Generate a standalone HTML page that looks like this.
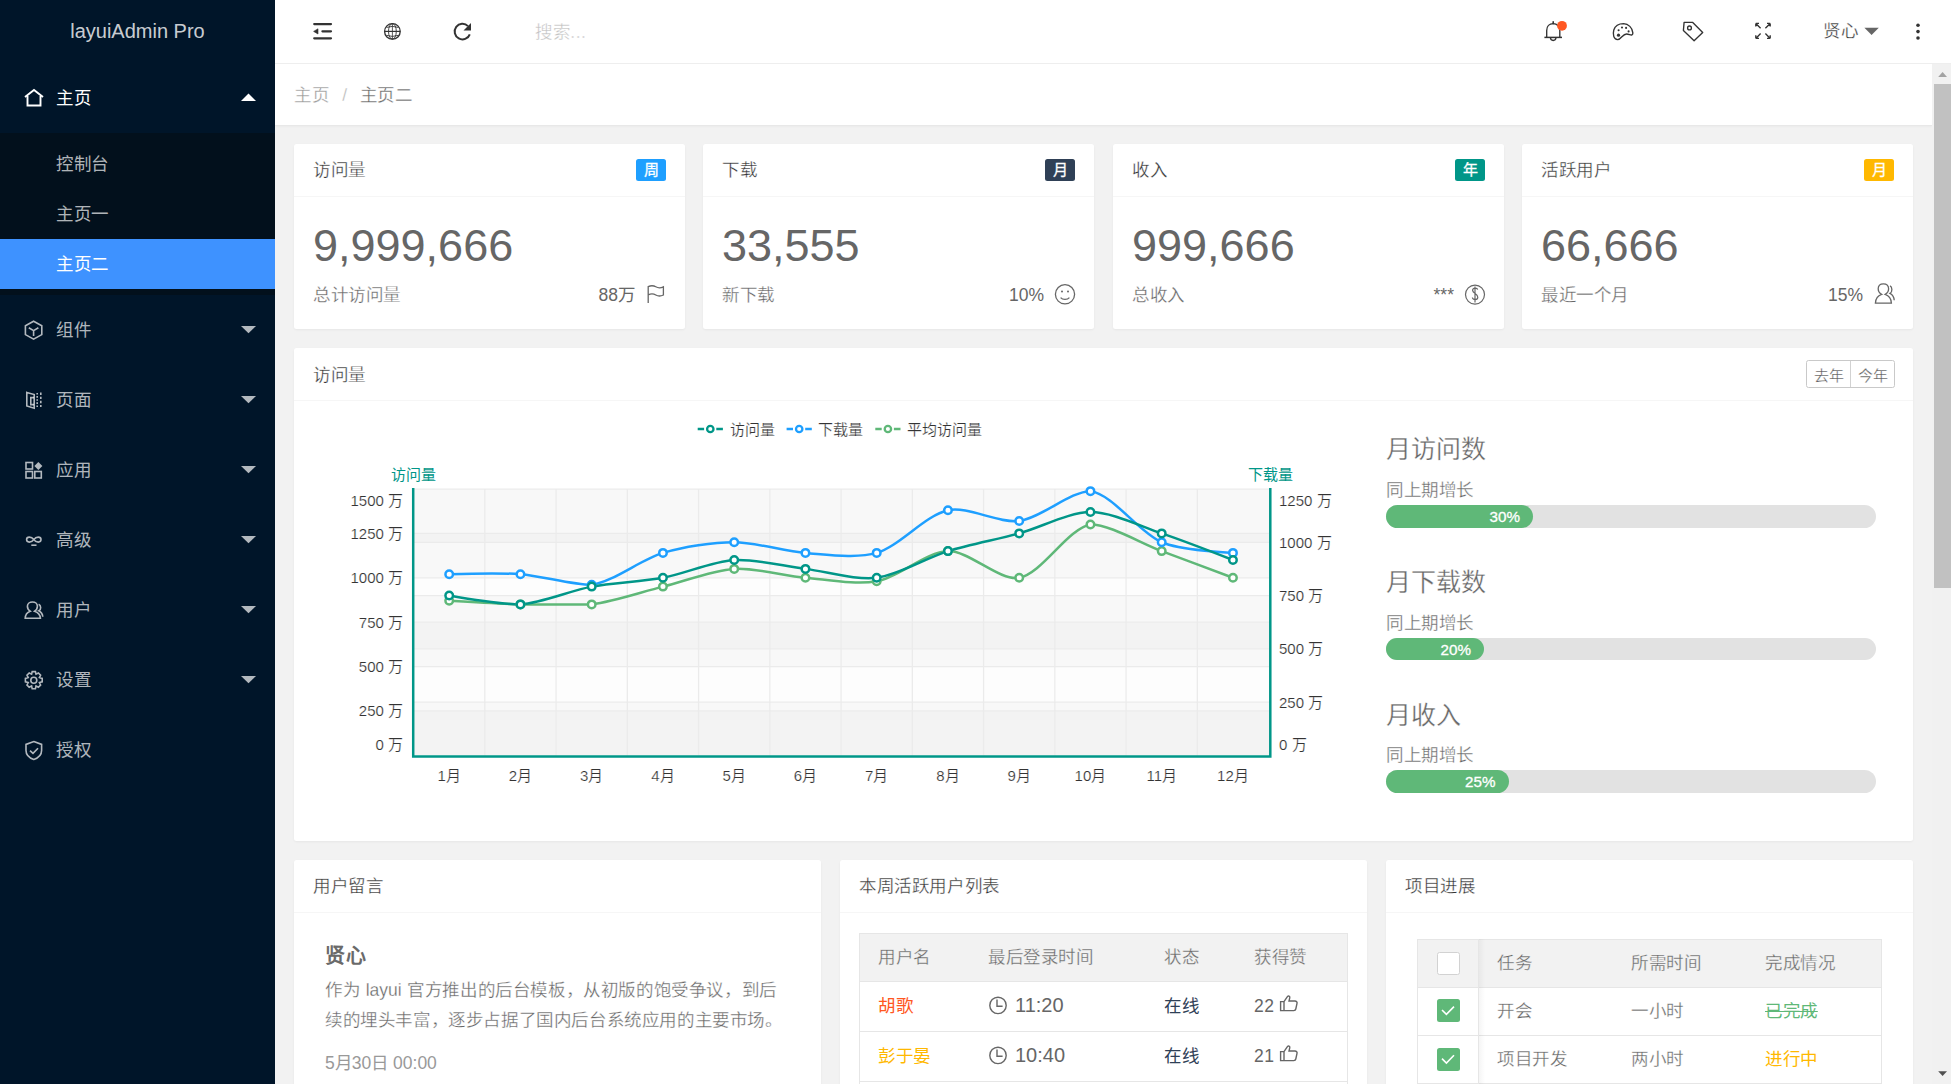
<!DOCTYPE html>
<html lang="zh-CN">
<head>
<meta charset="utf-8">
<title>layuiAdmin Pro</title>
<style>
*{margin:0;padding:0;box-sizing:border-box}
html,body{width:1951px;height:1084px;overflow:hidden}
body{position:relative;background:#f2f2f2;font-family:"Liberation Sans",sans-serif;font-size:17.5px;color:#333;letter-spacing:.6px}
.big,.logo,svg,.sr,.btns,.badge,.prog i,.h3,.l0{letter-spacing:0}
.a{position:absolute;white-space:nowrap}
svg{position:absolute;overflow:visible}
/* sidebar */
.side{position:absolute;left:0;top:0;width:275px;height:1084px;background:#001529}
.logo{left:0;width:275px;text-align:center;top:17px;line-height:28px;font-size:20px;color:rgba(255,255,255,.8)}
.nav{color:rgba(255,255,255,.7);font-size:17.5px;line-height:24px}
.nav.on{color:#fff}
.sub{position:absolute;left:0;top:133px;width:275px;height:162px;background:#02101c}
.sel{position:absolute;left:0;top:239px;width:275px;height:50px;background:#3e92ff}
/* header */
.hdr{position:absolute;left:275px;top:0;width:1676px;height:64px;background:#fff;border-bottom:1px solid #eee}
.crumb{position:absolute;left:275px;top:64px;width:1657px;height:62px;background:#fff;border-bottom:1px solid #e8e8e8;box-shadow:0 1px 2px rgba(0,0,0,.03)}
.sbar{position:absolute;left:1932px;top:64px;width:19px;height:1020px;background:#f1f1f1}
.thumb{position:absolute;left:2px;top:20px;width:17px;height:504px;background:#c1c1c1}
/* cards */
.card{position:absolute;background:#fff;border-radius:2.5px;box-shadow:0 1px 2.5px rgba(0,0,0,.05)}
.ch{position:absolute;left:0;top:0;right:0;height:53px;border-bottom:1px solid #f6f6f6}
.ct{left:19px;top:12px;line-height:28px;font-size:17.5px;color:#333}
.badge{position:absolute;top:15px;right:19px;width:30px;height:22px;border-radius:2.5px;color:#fff;font-size:15px;line-height:22px;text-align:center;-webkit-text-stroke:.3px #fff}
.big{left:19px;top:77px;font-size:45px;line-height:50px;color:#666}
.st{left:19px;top:139px;line-height:24px;color:#666}
.sr{right:19px;top:139px;line-height:24px;color:#666}
.btns{position:absolute;right:18px;top:12px;height:28px;width:89px;border:1px solid #c9c9c9;border-radius:2.5px;font-size:15px;color:#555}
.btns span{position:absolute;top:0;height:26px;line-height:30px;-webkit-text-stroke:.3px #fff;width:44px;text-align:center}
.h3{font-size:25px;line-height:30px;color:#666}
.pl{font-size:17.5px;line-height:24px;color:#666}
.prog{position:absolute;left:1386px;width:490px;height:22.5px;border-radius:12px;background:#e2e2e2}
.prog i{position:absolute;left:0;top:0;height:22.5px;border-radius:12px;background:#5fb878;color:#fff;font-style:normal;font-size:15.2px;line-height:23.6px;text-align:right;padding-right:13px;-webkit-text-stroke:.3px #fff}
table{border-collapse:collapse}
.tb{position:absolute;border:1px solid #e6e6e6}
.th{position:absolute;background:#f2f2f2}
.tl{position:absolute;height:1px;background:#e6e6e6}
.tx{color:#666;line-height:24px}
.cb{position:absolute;width:22.5px;height:22.5px;border-radius:2.5px}

.sk{-webkit-text-stroke:.3px #fff}
.skg{-webkit-text-stroke:.3px #f2f2f2}
</style>
</head>
<body>
<!-- SIDEBAR -->
<div class="side">
  <div class="a logo">layuiAdmin Pro</div>
  <div class="sub"></div>
  <div class="sel"></div>
  <div class="a nav on skn" style="left:56px;top:86px">主页</div>
  <div class="a nav sks" style="left:56px;top:152px">控制台</div>
  <div class="a nav sks" style="left:56px;top:202px">主页一</div>
  <div class="a nav on skb" style="left:56px;top:252px">主页二</div>
  <div class="a nav skn" style="left:56px;top:318px">组件</div>
  <div class="a nav skn" style="left:56px;top:388px">页面</div>
  <div class="a nav skn" style="left:56px;top:458px">应用</div>
  <div class="a nav skn" style="left:56px;top:528px">高级</div>
  <div class="a nav skn" style="left:56px;top:598px">用户</div>
  <div class="a nav skn" style="left:56px;top:668px">设置</div>
  <div class="a nav skn" style="left:56px;top:738px">授权</div>
  <svg width="275" height="800" style="left:0;top:0">
    <!-- arrows -->
    <path d="M241 101 L248.5 93.6 L256 101 Z" fill="#fff"/>
    <g fill="rgba(255,255,255,.7)">
      <path d="M241 326 L256 326 L248.5 333.3 Z"/>
      <path d="M241 396 L256 396 L248.5 403.3 Z"/>
      <path d="M241 466 L256 466 L248.5 473.3 Z"/>
      <path d="M241 536 L256 536 L248.5 543.3 Z"/>
      <path d="M241 606 L256 606 L248.5 613.3 Z"/>
      <path d="M241 676 L256 676 L248.5 683.3 Z"/>
    </g>
    <!-- home -->
    <g fill="none" stroke="#fff" stroke-width="1.9">
      <path d="M25 97 L34 90 L43 97"/>
      <path d="M27.5 96 V105.5 H40.5 V96"/>
    </g>
    <g fill="none" stroke="rgba(255,255,255,.7)" stroke-width="1.6">
      <!-- component cube -->
      <path d="M33.6 321.2 L41.8 325.8 V334.6 L33.6 339.2 L25.4 334.6 V325.8 Z"/>
      <path d="M28.8 327.8 L33.6 330.6 L38.4 327.8 M33.6 330.6 V336"/>
      <!-- page -->
      <path d="M26.8 392.4 L34.2 394.6 V408.2 L26.8 406 Z"/>
      <path d="M34 397.6 H30.8 V404.6 H34"/>
      <path d="M37.2 393 V408" stroke-dasharray="1.6 1.5"/>
      <path d="M40.8 392.6 V407" stroke-dasharray="2.4 1.7"/>
      <!-- app -->
      <rect x="26" y="462.5" width="6.5" height="6.5"/>
      <rect x="26" y="471.5" width="6.5" height="6.5"/>
      <rect x="34.8" y="471.5" width="6.5" height="6.5"/>
      <!-- senior infinity -->
      <path d="M33.8 539.6 C31.5 536.3 26.6 536.3 26.6 539.6 C26.6 542.9 31.5 542.9 33.8 539.6 C36.1 536.3 41 536.3 41 539.6 C41 542.9 36.1 542.9 33.8 539.6 Z"/>
      <path d="M31.3 545.2 H36.5"/>
      <!-- user -->
      <path d="M25.2 618.2 C25.4 614.6 27.4 612.2 30.2 611.2 C28.4 610 27.4 608 27.4 606.2 C27.4 603.6 29.8 602 32.5 602 C35.2 602 37.4 603.6 37.4 606.2 C37.4 608 36.4 610 34.6 611.2 C37.4 612.2 40.2 614.6 40.4 618.2 Z"/>
      <path d="M38.6 604.2 C41.2 605.2 41.4 609.6 38.8 610.8 C41 612 42.6 614.4 42.8 616.8"/>
      <!-- gear -->
      <circle cx="33.8" cy="680.2" r="3"/>
      <path d="M32.2 671.6 H35.4 L36 674.2 L38.4 673 L40.6 675.2 L39.4 677.6 L42.2 678.4 V681.8 L39.4 682.6 L40.6 685 L38.4 687.2 L36 686 L35.4 688.8 H32.2 L31.6 686 L29.2 687.2 L27 685 L28.2 682.6 L25.4 681.8 V678.4 L28.2 677.6 L27 675.2 L29.2 673 L31.6 674.2 Z"/>
      <!-- shield -->
      <path d="M33.8 741.6 L41.6 744.4 V750.4 C41.6 755 37.8 758 33.8 759.4 C29.8 758 26 755 26 750.4 V744.4 Z"/>
      <path d="M30 750.6 L33 753.4 L38 748.2"/>
    </g>
    <path d="M38.4 462 L42.4 466 L38.4 470 L34.4 466 Z" fill="rgba(255,255,255,.7)"/>
  </svg>
</div>

<!-- HEADER -->
<div class="hdr"></div>
<svg width="1676" height="63" style="left:0;top:0">
  <g fill="#333">
    <!-- shrink -->
    <path d="M314.2 24.1 H331 M322.4 31.3 H331 M314.2 38.3 H331" stroke="#333" stroke-width="2.2" stroke-linecap="round" fill="none"/>
    <path d="M313.6 31.4 L318 28.8 V34 Z" stroke="#333" stroke-width=".6" stroke-linejoin="round"/>
  </g>
  <g fill="none" stroke="#333" stroke-width="1.5">
    <!-- globe -->
    <circle cx="392.4" cy="31.4" r="7.8" stroke-width="1.35"/>
    <path d="M384.6 31.4 H400.2" stroke-width="1.2"/>
    <path d="M392.4 23.6 V39.2" stroke-width=".8"/>
    <ellipse cx="392.4" cy="31.4" rx="3.9" ry="7.8" stroke-width=".9"/>
    <path d="M386.6 27.4 Q392.4 25.4 398.2 27.4 M386.6 35.4 Q392.4 37.4 398.2 35.4" stroke-width=".9"/>
    <!-- refresh -->
    <path d="M469.8 34.3 A7.8 7.8 0 1 1 468 26.1" stroke-width="2"/>
  </g>
  <path d="M471 23 V30.6 H463.5 Z" fill="#333"/>
</svg>
<div class="a sk" style="left:535px;top:19px;line-height:26px;font-size:17.5px;color:#c2c2c2">搜索...</div>
<svg width="1951" height="63" style="left:0;top:0">
  <g fill="none" stroke="#333" stroke-width="1.35">
    <!-- bell -->
        <path d="M1546.7 37.4 V30.4 C1546.7 26.4 1549.4 23.6 1553.2 23.6 C1557 23.6 1559.8 26.4 1559.8 30.4 V37.4"/>
    <path d="M1544.4 37.4 H1562" stroke-width="1.5"/>
    <path d="M1550.4 37.8 C1550.8 41.4 1555.6 41.4 1556 37.8"/>
    <path d="M1553.2 21.8 V23.8" stroke-width="1.6" stroke-linecap="round"/>
    <!-- palette -->
    <path d="M1617.6 39.6 C1613.6 39.4 1612.6 34.4 1613.8 30 C1615.2 25.6 1619.6 23.6 1623.6 23.6 C1628.4 23.8 1632.4 27.8 1632.8 32.6 C1632.9 33.8 1632.6 35.2 1631.4 35 C1629.8 34.8 1628.6 34 1626.6 34 C1624.6 34 1623 35.6 1621.6 37 C1620.4 38.4 1619.2 39.6 1617.6 39.6 Z"/>
    <!-- tag -->
    <path d="M1684.1 22.3 H1692.5 L1702.7 32.5 L1694.1 40.8 L1683.4 30.4 Z" stroke-linejoin="round"/>
    <circle cx="1689.5" cy="27.9" r="1.9"/>
    <!-- fullscreen -->
    <path d="M1755.8 23.4 L1760.6 28.2 M1755.8 23.4 H1759 M1755.8 23.4 V26.6" />
    <path d="M1770.2 23.4 L1765.4 28.2 M1770.2 23.4 H1767 M1770.2 23.4 V26.6" />
    <path d="M1755.8 38.4 L1760.6 33.6 M1755.8 38.4 H1759 M1755.8 38.4 V35.2" />
    <path d="M1770.2 38.4 L1765.4 33.6 M1770.2 38.4 H1767 M1770.2 38.4 V35.2" />
  </g>
  <circle cx="1562" cy="25.8" r="4.9" fill="#ff5722"/>
  <g fill="#333">
    <circle cx="1618.5" cy="35.2" r="1.6"/>
    <circle cx="1618.6" cy="30.3" r="1.05"/>
    <circle cx="1622" cy="27.5" r="1.05"/>
    <circle cx="1626.1" cy="27.9" r="1.05"/>
    <circle cx="1628.6" cy="31.4" r="1.05"/>
    <circle cx="1918" cy="25.2" r="1.8"/>
    <circle cx="1918" cy="31.6" r="1.8"/>
    <circle cx="1918" cy="38" r="1.8"/>
  </g>
  <path d="M1864.4 27.8 H1878.8 L1871.6 35 Z" fill="#666"/>
</svg>
<div class="a sk" style="left:1823px;top:18px;line-height:26px;font-size:17.5px;color:#333">贤心</div>

<!-- BREADCRUMB -->
<div class="crumb"></div>
<div class="a sk" style="left:294px;top:82px;line-height:26px;color:#999">主页<span style="margin:0 12px 0 13px;color:#b5b5b5">/</span><span style="color:#666">主页二</span></div>

<!-- SCROLLBAR -->
<div class="sbar"><div class="thumb"></div></div>
<svg width="1951" height="1084" style="left:0;top:0">
  <path d="M1938.2 77 L1942.6 72 L1947 77 Z" fill="#a3a3a3"/>
  <path d="M1938.2 1071.2 L1947 1071.2 L1942.6 1076 Z" fill="#505050"/>
</svg>

<!-- STAT CARDS -->
<div class="card" style="left:294px;top:144px;width:391px;height:185px">
  <div class="ch"></div>
  <div class="a ct sk">访问量</div>
  <div class="badge" style="background:#1e9fff">周</div>
  <div class="a big">9,999,666</div>
  <div class="a st sk">总计访问量</div>
  <div class="a sr" style="right:50px">88万</div>
  <svg width="391" height="185" style="left:0;top:0"><g fill="none" stroke="#666" stroke-width="1.3">
    <path d="M354.2 159 V142.6 C357 141.4 359.4 141.4 361.8 142.8 C364.2 144.2 366.6 144.2 369.4 142.8 V151 C366.6 152.4 364.2 152.4 361.8 151 C359.4 149.6 357 149.6 354.2 150.8"/>
  </g></svg>
</div>
<div class="card" style="left:703px;top:144px;width:391px;height:185px">
  <div class="ch"></div>
  <div class="a ct sk">下载</div>
  <div class="badge" style="background:#2f4056">月</div>
  <div class="a big">33,555</div>
  <div class="a st sk">新下载</div>
  <div class="a sr" style="right:50px">10%</div>
  <svg width="391" height="185" style="left:0;top:0"><g fill="none" stroke="#666" stroke-width="1.3">
    <circle cx="362" cy="150.3" r="9.6"/>
    <path d="M357.6 153.6 C359.6 156 364.4 156 366.4 153.6"/>
  </g><g fill="#666"><circle cx="359" cy="147.6" r="1"/><circle cx="365" cy="147.6" r="1"/></g></svg>
</div>
<div class="card" style="left:1113px;top:144px;width:391px;height:185px">
  <div class="ch"></div>
  <div class="a ct sk">收入</div>
  <div class="badge" style="background:#009688">年</div>
  <div class="a big">999,666</div>
  <div class="a st sk">总收入</div>
  <div class="a sr" style="right:50px">***</div>
  <svg width="391" height="185" style="left:0;top:0"><g fill="none" stroke="#666" stroke-width="1.2">
    <circle cx="362" cy="150.6" r="9.5"/>
    <path d="M364.6 145.6 C364.4 143.6 359.4 143.4 359.6 146.4 C359.8 149.4 364.8 149.8 364.8 153.2 C364.8 156.4 359.4 156.2 359.4 153.6 M362 142.6 V158.6" />
  </g></svg>
</div>
<div class="card" style="left:1522px;top:144px;width:391px;height:185px">
  <div class="ch"></div>
  <div class="a ct sk">活跃用户</div>
  <div class="badge" style="background:#ffb800">月</div>
  <div class="a big">66,666</div>
  <div class="a st sk">最近一个月</div>
  <div class="a sr" style="right:50px">15%</div>
  <svg width="391" height="185" style="left:0;top:0"><g fill="none" stroke="#666" stroke-width="1.3">
    <path d="M353.4 159.2 C353.6 154.8 356 151.6 359.6 150.4 C357.4 149.2 356.2 147.2 356.2 144.8 C356.2 141.4 358.6 139.8 361.4 139.8 C364.2 139.8 366.6 141.4 366.6 144.8 C366.6 147.2 365.4 149.2 363.2 150.4 C366.8 151.6 369.2 154.8 369.4 159.2 Z"/>
    <path d="M368 141.8 C370.4 142.8 370.6 148 368 149.4 C370.4 150.6 372 153.4 372.2 156.2"/>
  </g></svg>
</div>

<!-- CHART CARD -->
<div class="card" style="left:294px;top:348px;width:1619px;height:493px">
  <div class="ch"></div>
  <div class="a ct sk" style="top:13px">访问量</div>
  <div class="btns"><span style="left:0;border-right:1px solid #d2d2d2;width:44px">去年</span><span style="left:44px">今年</span></div>
</div>
<svg width="1951" height="1084" style="left:0;top:0">
<rect x="413.00" y="710.88" width="857.00" height="44.38" fill="#f3f3f3"/>
<rect x="413.00" y="702.00" width="857.00" height="8.88" fill="#f8f8f8"/>
<rect x="413.00" y="666.50" width="857.00" height="35.50" fill="#fdfdfd"/>
<rect x="413.00" y="648.75" width="857.00" height="17.75" fill="#f8f8f8"/>
<rect x="413.00" y="622.12" width="857.00" height="26.62" fill="#f3f3f3"/>
<rect x="413.00" y="595.50" width="857.00" height="26.62" fill="#f8f8f8"/>
<rect x="413.00" y="577.75" width="857.00" height="17.75" fill="#fdfdfd"/>
<rect x="413.00" y="542.25" width="857.00" height="35.50" fill="#f8f8f8"/>
<rect x="413.00" y="533.38" width="857.00" height="8.88" fill="#f3f3f3"/>
<rect x="413.00" y="489.00" width="857.00" height="44.38" fill="#f8f8f8"/>
<path d="M413.00 710.88 H1270.00 M413.00 666.50 H1270.00 M413.00 622.12 H1270.00 M413.00 577.75 H1270.00 M413.00 533.38 H1270.00 M413.00 489.00 H1270.00 M413.00 702.00 H1270.00 M413.00 648.75 H1270.00 M413.00 595.50 H1270.00 M413.00 542.25 H1270.00 M413.00 489.00 H1270.00 M484.82 489.00 V755.25 M556.08 489.00 V755.25 M627.33 489.00 V755.25 M698.58 489.00 V755.25 M769.83 489.00 V755.25 M841.08 489.00 V755.25 M912.33 489.00 V755.25 M983.58 489.00 V755.25 M1054.83 489.00 V755.25 M1126.08 489.00 V755.25 M1197.33 489.00 V755.25" stroke="#ebebeb" stroke-width="1.25" fill="none"/>
<path d="M413.2 488.00 V756.4 H1270.3 V488.00" stroke="#009688" stroke-width="2.5" fill="none"/>
<path d="M449.20 600.83 C449.20 600.83 499.06 603.84 520.45 604.38 C541.81 604.38 570.65 604.38 591.70 604.38 C613.40 601.67 641.58 591.95 662.95 586.62 C684.33 581.30 712.59 570.22 734.20 568.88 C755.34 567.56 784.01 575.88 805.45 577.75 C826.76 579.61 856.19 585.13 876.70 581.30 C898.94 577.14 926.39 551.66 947.95 551.12 C969.14 550.60 999.49 581.43 1019.20 577.75 C1042.24 573.44 1067.41 528.81 1090.45 524.50 C1110.16 524.50 1140.33 543.14 1161.70 551.12 C1183.08 559.11 1232.95 577.75 1232.95 577.75" stroke="#5fb878" stroke-width="2.5" fill="none" stroke-linejoin="round"/>
<path d="M449.20 574.20 C449.20 574.20 499.19 572.61 520.45 574.20 C541.94 575.81 571.19 584.85 591.70 584.85 C613.94 581.53 640.71 559.55 662.95 552.90 C683.46 546.77 712.83 542.25 734.20 542.25 C755.58 542.25 783.96 551.29 805.45 552.90 C826.71 554.49 856.96 558.80 876.70 552.90 C899.71 546.02 925.06 515.43 947.95 510.30 C967.81 505.85 998.57 523.73 1019.20 520.95 C1041.32 517.97 1070.43 491.13 1090.45 491.13 C1113.18 494.53 1138.23 532.08 1161.70 542.25 C1180.98 550.61 1232.95 552.90 1232.95 552.90" stroke="#1e9fff" stroke-width="2.5" fill="none" stroke-linejoin="round"/>
<path d="M449.20 595.50 C449.20 595.50 499.31 604.38 520.45 604.38 C542.06 603.03 570.09 590.66 591.70 586.62 C612.84 582.68 641.81 581.70 662.95 577.75 C684.56 573.71 712.59 561.35 734.20 560.00 C755.34 558.68 784.08 566.21 805.45 568.88 C826.83 571.54 855.94 580.34 876.70 577.75 C898.69 575.01 926.20 557.90 947.95 551.12 C968.95 544.59 997.96 539.20 1019.20 533.38 C1040.71 527.48 1069.08 512.08 1090.45 512.08 C1111.83 512.08 1140.57 526.27 1161.70 533.38 C1183.32 540.64 1232.95 560.00 1232.95 560.00" stroke="#009688" stroke-width="2.5" fill="none" stroke-linejoin="round"/>
<circle cx="449.20" cy="600.83" r="3.75" fill="#fff" stroke="#5fb878" stroke-width="2.5"/>
<circle cx="520.45" cy="604.38" r="3.75" fill="#fff" stroke="#5fb878" stroke-width="2.5"/>
<circle cx="591.70" cy="604.38" r="3.75" fill="#fff" stroke="#5fb878" stroke-width="2.5"/>
<circle cx="662.95" cy="586.62" r="3.75" fill="#fff" stroke="#5fb878" stroke-width="2.5"/>
<circle cx="734.20" cy="568.88" r="3.75" fill="#fff" stroke="#5fb878" stroke-width="2.5"/>
<circle cx="805.45" cy="577.75" r="3.75" fill="#fff" stroke="#5fb878" stroke-width="2.5"/>
<circle cx="876.70" cy="581.30" r="3.75" fill="#fff" stroke="#5fb878" stroke-width="2.5"/>
<circle cx="947.95" cy="551.12" r="3.75" fill="#fff" stroke="#5fb878" stroke-width="2.5"/>
<circle cx="1019.20" cy="577.75" r="3.75" fill="#fff" stroke="#5fb878" stroke-width="2.5"/>
<circle cx="1090.45" cy="524.50" r="3.75" fill="#fff" stroke="#5fb878" stroke-width="2.5"/>
<circle cx="1161.70" cy="551.12" r="3.75" fill="#fff" stroke="#5fb878" stroke-width="2.5"/>
<circle cx="1232.95" cy="577.75" r="3.75" fill="#fff" stroke="#5fb878" stroke-width="2.5"/>
<circle cx="449.20" cy="574.20" r="3.75" fill="#fff" stroke="#1e9fff" stroke-width="2.5"/>
<circle cx="520.45" cy="574.20" r="3.75" fill="#fff" stroke="#1e9fff" stroke-width="2.5"/>
<circle cx="591.70" cy="584.85" r="3.75" fill="#fff" stroke="#1e9fff" stroke-width="2.5"/>
<circle cx="662.95" cy="552.90" r="3.75" fill="#fff" stroke="#1e9fff" stroke-width="2.5"/>
<circle cx="734.20" cy="542.25" r="3.75" fill="#fff" stroke="#1e9fff" stroke-width="2.5"/>
<circle cx="805.45" cy="552.90" r="3.75" fill="#fff" stroke="#1e9fff" stroke-width="2.5"/>
<circle cx="876.70" cy="552.90" r="3.75" fill="#fff" stroke="#1e9fff" stroke-width="2.5"/>
<circle cx="947.95" cy="510.30" r="3.75" fill="#fff" stroke="#1e9fff" stroke-width="2.5"/>
<circle cx="1019.20" cy="520.95" r="3.75" fill="#fff" stroke="#1e9fff" stroke-width="2.5"/>
<circle cx="1090.45" cy="491.13" r="3.75" fill="#fff" stroke="#1e9fff" stroke-width="2.5"/>
<circle cx="1161.70" cy="542.25" r="3.75" fill="#fff" stroke="#1e9fff" stroke-width="2.5"/>
<circle cx="1232.95" cy="552.90" r="3.75" fill="#fff" stroke="#1e9fff" stroke-width="2.5"/>
<circle cx="449.20" cy="595.50" r="3.75" fill="#fff" stroke="#009688" stroke-width="2.5"/>
<circle cx="520.45" cy="604.38" r="3.75" fill="#fff" stroke="#009688" stroke-width="2.5"/>
<circle cx="591.70" cy="586.62" r="3.75" fill="#fff" stroke="#009688" stroke-width="2.5"/>
<circle cx="662.95" cy="577.75" r="3.75" fill="#fff" stroke="#009688" stroke-width="2.5"/>
<circle cx="734.20" cy="560.00" r="3.75" fill="#fff" stroke="#009688" stroke-width="2.5"/>
<circle cx="805.45" cy="568.88" r="3.75" fill="#fff" stroke="#009688" stroke-width="2.5"/>
<circle cx="876.70" cy="577.75" r="3.75" fill="#fff" stroke="#009688" stroke-width="2.5"/>
<circle cx="947.95" cy="551.12" r="3.75" fill="#fff" stroke="#009688" stroke-width="2.5"/>
<circle cx="1019.20" cy="533.38" r="3.75" fill="#fff" stroke="#009688" stroke-width="2.5"/>
<circle cx="1090.45" cy="512.08" r="3.75" fill="#fff" stroke="#009688" stroke-width="2.5"/>
<circle cx="1161.70" cy="533.38" r="3.75" fill="#fff" stroke="#009688" stroke-width="2.5"/>
<circle cx="1232.95" cy="560.00" r="3.75" fill="#fff" stroke="#009688" stroke-width="2.5"/>
<path d="M697.70 429.00 H704.10 M716.30 429.00 H722.90" stroke="#009688" stroke-width="2.5"/><circle cx="710.30" cy="429.00" r="3.2" fill="#fff" stroke="#009688" stroke-width="2.3"/>
<path d="M786.60 429.00 H793.00 M805.20 429.00 H811.80" stroke="#1e9fff" stroke-width="2.5"/><circle cx="799.20" cy="429.00" r="3.2" fill="#fff" stroke="#1e9fff" stroke-width="2.3"/>
<path d="M875.30 429.00 H881.70 M893.90 429.00 H900.50" stroke="#5fb878" stroke-width="2.5"/><circle cx="887.90" cy="429.00" r="3.2" fill="#fff" stroke="#5fb878" stroke-width="2.3"/>
<g font-family="Liberation Sans, sans-serif" font-size="15" stroke="#fff" stroke-width=".2" fill="#333">
<text x="729.7" y="434.5">访问量</text>
<text x="818.4" y="434.5">下载量</text>
<text x="906.9" y="434.5">平均访问量</text>
</g>
<g font-family="Liberation Sans, sans-serif" font-size="15" fill="#009688" text-anchor="middle">
<text x="413" y="480">访问量</text><text x="1270" y="480">下载量</text></g>
<g font-family="Liberation Sans, sans-serif" font-size="15" stroke="#fff" stroke-width=".2" fill="#333" text-anchor="end">
<text x="403" y="750.25">0 万</text>
<text x="403" y="716.38">250 万</text>
<text x="403" y="672.00">500 万</text>
<text x="403" y="627.62">750 万</text>
<text x="403" y="583.25">1000 万</text>
<text x="403" y="538.88">1250 万</text>
<text x="403" y="506.00">1500 万</text>
</g>
<g font-family="Liberation Sans, sans-serif" font-size="15" stroke="#fff" stroke-width=".2" fill="#333">
<text x="1279" y="750.25">0 万</text>
<text x="1279" y="707.50">250 万</text>
<text x="1279" y="654.25">500 万</text>
<text x="1279" y="601.00">750 万</text>
<text x="1279" y="547.75">1000 万</text>
<text x="1279" y="506.00">1250 万</text>
</g>
<g font-family="Liberation Sans, sans-serif" font-size="15" stroke="#fff" stroke-width=".2" fill="#333" text-anchor="middle">
<text x="449.20" y="781">1月</text>
<text x="520.45" y="781">2月</text>
<text x="591.70" y="781">3月</text>
<text x="662.95" y="781">4月</text>
<text x="734.20" y="781">5月</text>
<text x="805.45" y="781">6月</text>
<text x="876.70" y="781">7月</text>
<text x="947.95" y="781">8月</text>
<text x="1019.20" y="781">9月</text>
<text x="1090.45" y="781">10月</text>
<text x="1161.70" y="781">11月</text>
<text x="1232.95" y="781">12月</text>
</g>
</svg>
<div class="a h3 sk" style="left:1386px;top:434px">月访问数</div>
<div class="a pl sk" style="left:1386px;top:478px">同上期增长</div>
<div class="prog" style="top:505px"><i style="width:147px">30%</i></div>
<div class="a h3 sk" style="left:1386px;top:567px">月下载数</div>
<div class="a pl sk" style="left:1386px;top:611px">同上期增长</div>
<div class="prog" style="top:637.7px"><i style="width:98px">20%</i></div>
<div class="a h3 sk" style="left:1386px;top:700px">月收入</div>
<div class="a pl sk" style="left:1386px;top:743px">同上期增长</div>
<div class="prog" style="top:770.3px"><i style="width:122.5px">25%</i></div>

<!-- BOTTOM CARDS -->
<div class="card" style="left:294px;top:860px;width:527px;height:260px">
  <div class="ch"></div>
  <div class="a ct sk">用户留言</div>
  <div class="a" style="left:31px;top:83px;font-size:20px;line-height:26px;font-weight:bold;color:#6a6a6a">贤心</div>
  <div class="a tx sk" style="left:31px;top:114.7px;line-height:30px;white-space:normal;width:460px">作为 <span class="l0">layui</span> 官方推出的后台模板，从初版的饱受争议，到后续的埋头丰富，逐步占据了国内后台系统应用的主要市场。</div>
  <div class="a l0" style="left:31px;top:191px;line-height:24px;color:#999">5月30日 00:00</div>
</div>
<div class="card" style="left:840px;top:860px;width:527px;height:260px">
  <div class="ch"></div>
  <div class="a ct sk">本周活跃用户列表</div>
</div>
<!-- table 1 -->
<div class="th" style="left:859px;top:933px;width:489px;height:48px"></div>
<div class="tb" style="left:859px;top:933px;width:489px;height:200px"></div>
<div class="tl" style="left:859px;top:981px;width:489px"></div>
<div class="tl" style="left:859px;top:1031px;width:489px"></div>
<div class="tl" style="left:859px;top:1081px;width:489px"></div>
<div class="a tx skg" style="left:878px;top:945px">用户名</div>
<div class="a tx skg" style="left:988px;top:945px">最后登录时间</div>
<div class="a tx skg" style="left:1164px;top:945px">状态</div>
<div class="a tx skg" style="left:1254px;top:945px">获得赞</div>
<div class="a tx" style="left:878px;top:994px;color:#ff5722">胡歌</div>
<div class="a tx" style="left:878px;top:1044px;color:#ffb800">彭于晏</div>
<div class="a tx l0" style="left:1015px;top:993px;font-size:20px;color:#666">11:20</div>
<div class="a tx l0" style="left:1015px;top:1043px;font-size:20px;color:#666">10:40</div>
<div class="a tx" style="left:1164px;top:994px;color:#2f4056">在线</div>
<div class="a tx" style="left:1164px;top:1044px;color:#2f4056">在线</div>
<div class="a tx" style="left:1254px;top:994px;color:#666">22</div>
<div class="a tx" style="left:1254px;top:1044px;color:#666">21</div>
<svg width="1951" height="1084" style="left:0;top:0">
  <g fill="none" stroke="#666" stroke-width="1.4">
    <circle cx="998" cy="1005.4" r="8.2"/>
    <path d="M997 999.6 V1006.2 H1002.6"/>
    <circle cx="998" cy="1055.4" r="8.2"/>
    <path d="M997 1049.6 V1056.2 H1002.6"/>
    <path d="M1280.6 1001.6 H1284 V1010.6 H1280.6 Z M1284 1001.6 L1287.4 996.6 C1288.4 995.4 1290 996 1289.8 997.6 L1289 1001 H1295 C1296.4 1001 1297.4 1002 1297 1003.4 L1295.8 1009 C1295.6 1010 1294.8 1010.6 1293.8 1010.6 H1284"/>
    <path d="M1280.6 1051.6 H1284 V1060.6 H1280.6 Z M1284 1051.6 L1287.4 1046.6 C1288.4 1045.4 1290 1046 1289.8 1047.6 L1289 1051 H1295 C1296.4 1051 1297.4 1052 1297 1053.4 L1295.8 1059 C1295.6 1060 1294.8 1060.6 1293.8 1060.6 H1284"/>
  </g>
</svg>
<div class="card" style="left:1386px;top:860px;width:527px;height:260px">
  <div class="ch"></div>
  <div class="a ct sk">项目进展</div>
</div>
<!-- table 2 -->
<div class="th" style="left:1417px;top:939px;width:465px;height:48px"></div>
<div class="tb" style="left:1417px;top:939px;width:465px;height:200px"></div>
<div class="tl" style="left:1417px;top:987px;width:465px"></div>
<div class="tl" style="left:1417px;top:1035px;width:465px"></div>
<div class="tl" style="left:1417px;top:1083px;width:465px"></div>
<div style="position:absolute;left:1478px;top:939px;width:1px;height:150px;background:#e6e6e6"></div>
<div style="position:absolute;left:1479px;top:939px;width:6px;height:150px;background:linear-gradient(to right,rgba(0,0,0,.04),rgba(0,0,0,0))"></div>
<div class="cb" style="left:1437px;top:952px;background:#fff;border:1px solid #d2d2d2"></div>
<div class="cb" style="left:1437px;top:999px;background:#5fb878"></div>
<div class="cb" style="left:1437px;top:1048px;background:#5fb878"></div>
<svg width="1951" height="1084" style="left:0;top:0"><g fill="none" stroke="#fff" stroke-width="1.6">
  <path d="M1442 1010 L1446.4 1014.4 L1454 1006.6"/>
  <path d="M1442 1058.6 L1446.4 1063 L1454 1055.2"/>
</g></svg>
<div class="a tx skg" style="left:1497px;top:951px">任务</div>
<div class="a tx skg" style="left:1631px;top:951px">所需时间</div>
<div class="a tx skg" style="left:1765px;top:951px">完成情况</div>
<div class="a tx sk" style="left:1497px;top:999px">开会</div>
<div class="a tx sk" style="left:1631px;top:999px">一小时</div>
<div class="a tx" style="left:1765px;top:999px;color:#5fb878;text-decoration:line-through">已完成</div>
<div class="a tx sk" style="left:1497px;top:1047px">项目开发</div>
<div class="a tx sk" style="left:1631px;top:1047px">两小时</div>
<div class="a tx" style="left:1765px;top:1047px;color:#ffb800">进行中</div>
</body>
</html>
